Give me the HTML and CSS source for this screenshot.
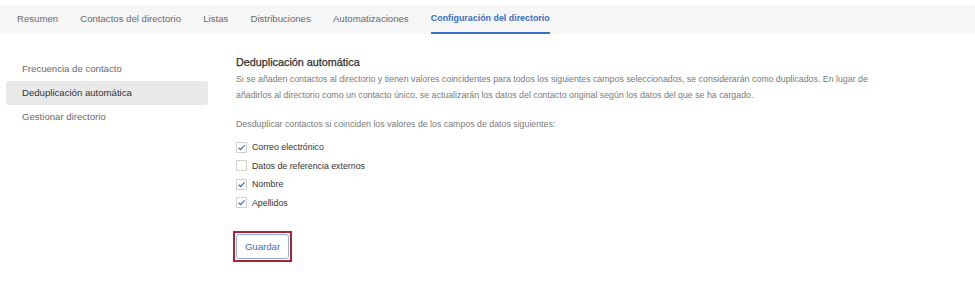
FILE: index.html
```html
<!DOCTYPE html>
<html lang="es">
<head>
    <meta charset="UTF-8">
    <title>Configuración del directorio</title>
    <link rel="stylesheet" href="styles.css">
</head>
<body>
    <nav class="tabs">
        <span class="tab">Resumen</span>
        <span class="tab">Contactos del directorio</span>
        <span class="tab">Listas</span>
        <span class="tab">Distribuciones</span>
        <span class="tab">Automatizaciones</span>
        <span class="tab tab-active">Configuración del directorio</span>
    </nav>
    <div class="page">
        <aside class="sidebar">
            <div class="side-item">Frecuencia de contacto</div>
            <div class="side-item side-active">Deduplicación automática</div>
            <div class="side-item">Gestionar directorio</div>
        </aside>
        <main class="content">
            <h2 class="title">Deduplicación automática</h2>
            <p class="desc">Si se añaden contactos al directorio y tienen valores coincidentes para todos los siguientes campos seleccionados, se considerarán como duplicados. En lugar de añadirlos al directorio como un contacto único, se actualizarán los datos del contacto original según los datos del que se ha cargado.</p>
            <p class="desc lead">Desduplicar contactos si coinciden los valores de los campos de datos siguientes:</p>
            <ul class="checks">
                <li class="check"><span class="box"><svg viewBox="0 0 10 10"><path d="M1.8 5.2 L4 7.3 L8.4 2.6"/></svg></span>Correo electrónico</li>
                <li class="check"><span class="box"></span>Datos de referencia externos</li>
                <li class="check"><span class="box"><svg viewBox="0 0 10 10"><path d="M1.8 5.2 L4 7.3 L8.4 2.6"/></svg></span>Nombre</li>
                <li class="check"><span class="box"><svg viewBox="0 0 10 10"><path d="M1.8 5.2 L4 7.3 L8.4 2.6"/></svg></span>Apellidos</li>
            </ul>
            <div class="highlight">
                <button class="save">Guardar</button>
            </div>
        </main>
    </div>
</body>
</html>
```

FILE: styles.css
```css
body{
    margin: 0;
    background-color: #ffffff;
    font-family: "Liberation Sans", Arial, sans-serif;
    color: #333333;
}

.tabs{
    display: flex;
    gap: 22.2px;
    margin-top: 5px;
    height: 29px;
    padding-left: 17px;
    background-color: #f6f6f6;
    box-sizing: border-box;
}

.tab{
    display: flex;
    align-items: center;
    height: 29px;
    padding-bottom: 1px;
    box-sizing: border-box;
    font-size: 9.6px;
    color: #6a6a6a;
    border-bottom: 2px solid transparent;
}

.tab-active{
    color: #3a6fc2;
    font-weight: bold;
    font-size: 8.9px;
    border-bottom-color: #3a6fc2;
}

.page{
    display: flex;
    padding-top: 20px;
}

.sidebar{
    width: 202px;
    margin-left: 6px;
    margin-right: 28px;
    padding-top: 3px;
}

.side-item{
    height: 24px;
    line-height: 24px;
    padding-left: 16px;
    font-size: 9.6px;
    color: #6a6a6a;
    border-radius: 3px;
}

.side-active{
    background-color: #e9e9e9;
    color: #333333;
}

.content{
    flex: 1;
    padding-right: 100px;
}

.title{
    margin: 0;
    font-size: 10.8px;
    font-weight: normal;
    line-height: 16px;
    color: #2f2f2f;
    -webkit-text-stroke: 0.25px #2f2f2f;
}

.desc{
    margin: 1px 0 0 0;
    font-size: 8.8px;
    line-height: 16px;
    color: #7a7a7a;
}

.lead{
    margin-top: 13px;
}

.checks{
    list-style: none;
    margin: 6px 0 0 0;
    padding: 0;
}

.check{
    display: flex;
    align-items: center;
    gap: 5px;
    height: 18.5px;
    font-size: 8.8px;
    color: #333333;
}

.box{
    width: 9px;
    height: 9px;
    border: 1px solid #cfcfcf;
    border-radius: 1px;
    background-color: #ffffff;
}

.box svg{
    display: block;
    width: 9px;
    height: 9px;
}

.box path{
    fill: none;
    stroke: #3a6fc2;
    stroke-width: 1.4;
}

.highlight{
    display: inline-block;
    margin-top: 19px;
    margin-left: -3px;
    padding: 1px;
    border: 2px solid #ad2430;
}

.save{
    display: block;
    width: 53px;
    height: 25px;
    background-color: #ffffff;
    border: 1px solid #8fb0e2;
    border-radius: 3px;
    color: #3a6fc2;
    font-family: "Liberation Sans", Arial, sans-serif;
    font-size: 9.6px;
}
```
